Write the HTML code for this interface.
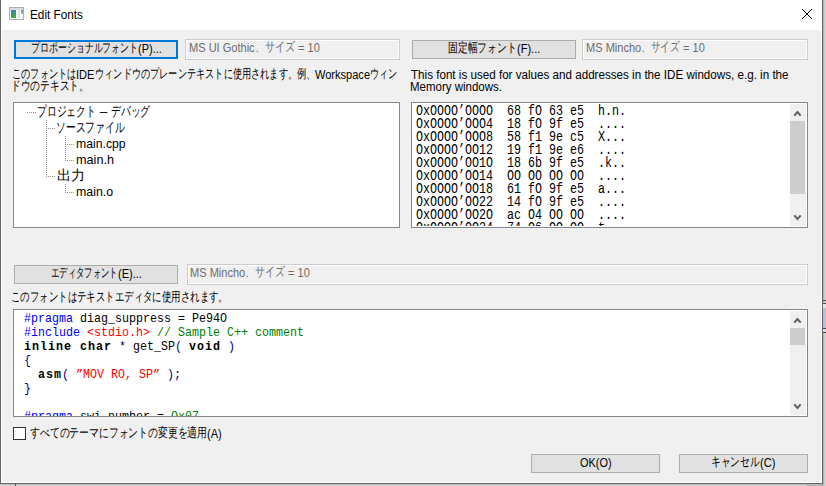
<!DOCTYPE html>
<html lang="ja">
<head>
<meta charset="utf-8">
<title>Edit Fonts</title>
<style>
html,body{margin:0;padding:0;}
body{width:826px;height:486px;overflow:hidden;position:relative;background:#d0d0d0;font-family:"Liberation Sans",sans-serif;color:#000;}
.a{position:absolute;}
.bm{display:inline-block;width:0;height:0;vertical-align:baseline;}.s{position:absolute;white-space:pre;transform-origin:0 0;}.r{display:inline-block;vertical-align:baseline;}.ri{display:inline-block;transform-origin:0 0;white-space:pre;}
.mono{font-family:"Liberation Mono",monospace;white-space:pre;color:#000;}
.pp{color:#0000ff;}
.str{color:#ff0000;}
.cm{color:#008000;}
.op{color:#000080;}
.mono b{letter-spacing:1.115px;}
</style>
</head>
<body>
<div class="a" style="left:0px;top:0px;width:823px;height:484px;background:#666;"></div>
<div class="a" style="left:1px;top:0px;width:821px;height:483px;background:#fff;"></div>
<div class="a" style="left:2px;top:30px;width:819px;height:452px;background:#f0f0f0;"></div>
<div class="a" style="left:823px;top:0px;width:3px;height:486px;background:linear-gradient(to right,#a8a8a8,#d0d0d0 60%,#e0e0e0);"></div>
<div class="a" style="left:0px;top:484px;width:823px;height:2px;background:linear-gradient(to bottom,#b8b8b8,#d8d8d8);"></div>
<div class="a" style="left:15px;top:484px;width:1px;height:2px;background:#555;"></div>
<div class="a" style="left:806px;top:484px;width:17px;height:2px;background:#b4b4b4;"></div>
<div class="a" style="left:823px;top:300px;width:3px;height:1px;background:#555;"></div>
<div class="a" style="left:823px;top:303px;width:3px;height:1px;background:#555;"></div>
<div class="a" style="left:823px;top:304px;width:3px;height:4px;background:#e4e4ec;"></div>
<div class="a" style="left:823px;top:308px;width:3px;height:20px;background:#b4c4d4;"></div>
<div class="a" style="left:823px;top:328px;width:3px;height:1px;background:#444;"></div>
<div class="a" style="left:823px;top:329px;width:3px;height:3px;background:#d8d8e8;"></div>
<div class="a" style="left:823px;top:332px;width:3px;height:1px;background:#444;"></div>
<svg class="a" style="left:9px;top:7px" width="15" height="13" viewBox="0 0 15 13">
<rect x="0.5" y="0.5" width="14" height="12" fill="#fafafa" stroke="#a9adb5"/>
<rect x="1" y="1" width="13" height="2" fill="#d8dbe0"/>
<defs><linearGradient id="g1" x1="0" y1="0" x2="0.4" y2="1"><stop offset="0" stop-color="#4a78bf"/><stop offset="1" stop-color="#3aae48"/></linearGradient>
<linearGradient id="g2" x1="0" y1="0" x2="0" y2="1"><stop offset="0" stop-color="#5a8ad0"/><stop offset="1" stop-color="#8fd080"/></linearGradient></defs>
<rect x="2" y="3" width="5" height="8" fill="url(#g1)"/>
<rect x="9" y="3" width="2" height="8" fill="#e2e2e2"/>
<rect x="12" y="3" width="2" height="4" fill="url(#g2)"/>
</svg>
<div class="s" style="left:30.00px;top:7.0px;font-size:12px;line-height:16px;color:#000;"><span class="bm"></span><span class="r" style="width:53.018px"><span class="ri" style="font-size:12px;transform:scaleX(0.9812);">Edit Fonts</span></span></div>
<svg class="a" style="left:802px;top:9px" width="10" height="10" viewBox="0 0 10 10" fill="#000" shape-rendering="crispEdges"><rect x="0" y="0" width="1" height="1"/><rect x="9" y="0" width="1" height="1"/><rect x="1" y="1" width="1" height="1"/><rect x="8" y="1" width="1" height="1"/><rect x="2" y="2" width="1" height="1"/><rect x="7" y="2" width="1" height="1"/><rect x="3" y="3" width="1" height="1"/><rect x="6" y="3" width="1" height="1"/><rect x="4" y="4" width="1" height="1"/><rect x="5" y="4" width="1" height="1"/><rect x="5" y="5" width="1" height="1"/><rect x="4" y="5" width="1" height="1"/><rect x="6" y="6" width="1" height="1"/><rect x="3" y="6" width="1" height="1"/><rect x="7" y="7" width="1" height="1"/><rect x="2" y="7" width="1" height="1"/><rect x="8" y="8" width="1" height="1"/><rect x="1" y="8" width="1" height="1"/><rect x="9" y="9" width="1" height="1"/><rect x="0" y="9" width="1" height="1"/><rect x="4" y="4" width="2" height="2"/></svg>
<div class="a" style="left:14px;top:40px;width:164px;height:19px;box-sizing:border-box;border:2px solid #0078d7;background:#e1e1e1;"></div>
<div class="s" style="left:31.00px;top:41.0px;font-size:12px;line-height:16px;color:#000;"><span class="bm"></span><span class="r" style="width:107.209px"><span class="ri" style="font-size:13px;transform:scaleX(0.6872);position:relative;top:-1px;">プロポーショナルフォント</span></span><span class="r" style="width:23.920px"><span class="ri" style="font-size:12px;transform:scaleX(0.9200);">(P)...</span></span></div>
<div class="a" style="left:185px;top:39px;width:215px;height:21px;box-sizing:border-box;border:1px solid #cccccc;background:#f0f0f0;box-shadow:inset 0 0 0 1px #ffffff;"></div>
<div class="s" style="left:189.00px;top:40.0px;font-size:12px;line-height:16px;color:#6d6d6d;"><span class="bm"></span><span class="r" style="width:65.651px"><span class="ri" style="font-size:12px;transform:scaleX(0.9200);">MS UI Gothic</span></span><span class="r" style="width:40.300px"><span class="ri" style="font-size:13px;transform:scaleX(0.7750);position:relative;top:-1px;">、サイズ</span></span><span class="r" style="width:24.869px"><span class="ri" style="font-size:12px;transform:scaleX(0.9200);"> = 10</span></span></div>
<div class="a" style="left:412px;top:40px;width:164px;height:19px;box-sizing:border-box;border:1px solid #adadad;background:#e1e1e1;"></div>
<div class="s" style="left:448.00px;top:41.0px;font-size:12px;line-height:16px;color:#000;"><span class="bm"></span><span class="r" style="width:68.756px"><span class="ri" style="font-size:13px;transform:scaleX(0.7556);position:relative;top:-1px;">固定幅フォント</span></span><span class="r" style="width:23.302px"><span class="ri" style="font-size:12px;transform:scaleX(0.9200);">(F)...</span></span></div>
<div class="a" style="left:582px;top:39px;width:226px;height:21px;box-sizing:border-box;border:1px solid #cccccc;background:#f0f0f0;box-shadow:inset 0 0 0 1px #ffffff;"></div>
<div class="s" style="left:586.00px;top:40.0px;font-size:12px;line-height:16px;color:#6d6d6d;"><span class="bm"></span><span class="r" style="width:55.229px"><span class="ri" style="font-size:12px;transform:scaleX(0.9200);">MS Mincho</span></span><span class="r" style="width:38.480px"><span class="ri" style="font-size:13px;transform:scaleX(0.7400);position:relative;top:-1px;">、サイズ</span></span><span class="r" style="width:24.869px"><span class="ri" style="font-size:12px;transform:scaleX(0.9200);"> = 10</span></span></div>
<div class="s" style="left:12.00px;top:67.0px;font-size:12px;line-height:16px;color:#000;"><span class="bm"></span><span class="r" style="width:64.256px"><span class="ri" style="font-size:13px;transform:scaleX(0.7061);position:relative;top:-1px;">このフォントは</span></span><span class="r" style="width:18.414px"><span class="ri" style="font-size:12px;transform:scaleX(0.9200);">IDE</span></span><span class="r" style="width:220.305px"><span class="ri" style="font-size:13px;transform:scaleX(0.7061);position:relative;top:-1px;">ウィンドウのプレーンテキストに使用されます。例、</span></span><span class="r" style="width:55.028px"><span class="ri" style="font-size:12px;transform:scaleX(0.9200);">Workspace</span></span><span class="r" style="width:27.538px"><span class="ri" style="font-size:13px;transform:scaleX(0.7061);position:relative;top:-1px;">ウィン</span></span></div>
<div class="s" style="left:11.00px;top:79.0px;font-size:12px;line-height:16px;color:#000;"><span class="bm"></span><span class="r" style="width:77.964px"><span class="ri" style="font-size:13px;transform:scaleX(0.7497);position:relative;top:-1px;">ドウのテキスト。</span></span></div>
<div class="s" style="left:411.00px;top:67.0px;font-size:12px;line-height:16px;color:#000;"><span class="bm"></span><span class="r" style="width:377.561px"><span class="ri" style="font-size:12px;transform:scaleX(0.9692);">This font is used for values and addresses in the IDE windows, e.g. in the</span></span></div>
<div class="s" style="left:410.00px;top:79.0px;font-size:12px;line-height:16px;color:#000;"><span class="bm"></span><span class="r" style="width:91.916px"><span class="ri" style="font-size:12px;transform:scaleX(0.9571);">Memory windows.</span></span></div>
<div class="a" style="left:13px;top:102px;width:387px;height:126px;box-sizing:border-box;border:1px solid #828790;background:#fff;"></div>
<div class="a" style="left:27px;top:112px;width:1px;height:1px;background:#909090;"></div><div class="a" style="left:29px;top:112px;width:1px;height:1px;background:#909090;"></div><div class="a" style="left:31px;top:112px;width:1px;height:1px;background:#909090;"></div><div class="a" style="left:33px;top:112px;width:1px;height:1px;background:#909090;"></div><div class="a" style="left:35px;top:112px;width:1px;height:1px;background:#909090;"></div>
<div class="a" style="left:46px;top:120px;width:1px;height:1px;background:#909090;"></div><div class="a" style="left:46px;top:122px;width:1px;height:1px;background:#909090;"></div><div class="a" style="left:46px;top:124px;width:1px;height:1px;background:#909090;"></div><div class="a" style="left:46px;top:126px;width:1px;height:1px;background:#909090;"></div><div class="a" style="left:46px;top:128px;width:1px;height:1px;background:#909090;"></div><div class="a" style="left:46px;top:130px;width:1px;height:1px;background:#909090;"></div><div class="a" style="left:46px;top:132px;width:1px;height:1px;background:#909090;"></div><div class="a" style="left:46px;top:134px;width:1px;height:1px;background:#909090;"></div><div class="a" style="left:46px;top:136px;width:1px;height:1px;background:#909090;"></div><div class="a" style="left:46px;top:138px;width:1px;height:1px;background:#909090;"></div><div class="a" style="left:46px;top:140px;width:1px;height:1px;background:#909090;"></div><div class="a" style="left:46px;top:142px;width:1px;height:1px;background:#909090;"></div><div class="a" style="left:46px;top:144px;width:1px;height:1px;background:#909090;"></div><div class="a" style="left:46px;top:146px;width:1px;height:1px;background:#909090;"></div><div class="a" style="left:46px;top:148px;width:1px;height:1px;background:#909090;"></div><div class="a" style="left:46px;top:150px;width:1px;height:1px;background:#909090;"></div><div class="a" style="left:46px;top:152px;width:1px;height:1px;background:#909090;"></div><div class="a" style="left:46px;top:154px;width:1px;height:1px;background:#909090;"></div><div class="a" style="left:46px;top:156px;width:1px;height:1px;background:#909090;"></div><div class="a" style="left:46px;top:158px;width:1px;height:1px;background:#909090;"></div><div class="a" style="left:46px;top:160px;width:1px;height:1px;background:#909090;"></div><div class="a" style="left:46px;top:162px;width:1px;height:1px;background:#909090;"></div><div class="a" style="left:46px;top:164px;width:1px;height:1px;background:#909090;"></div><div class="a" style="left:46px;top:166px;width:1px;height:1px;background:#909090;"></div><div class="a" style="left:46px;top:168px;width:1px;height:1px;background:#909090;"></div><div class="a" style="left:46px;top:170px;width:1px;height:1px;background:#909090;"></div><div class="a" style="left:46px;top:172px;width:1px;height:1px;background:#909090;"></div><div class="a" style="left:46px;top:174px;width:1px;height:1px;background:#909090;"></div><div class="a" style="left:46px;top:176px;width:1px;height:1px;background:#909090;"></div>
<div class="a" style="left:48px;top:128px;width:1px;height:1px;background:#909090;"></div><div class="a" style="left:50px;top:128px;width:1px;height:1px;background:#909090;"></div><div class="a" style="left:52px;top:128px;width:1px;height:1px;background:#909090;"></div><div class="a" style="left:54px;top:128px;width:1px;height:1px;background:#909090;"></div>
<div class="a" style="left:48px;top:176px;width:1px;height:1px;background:#909090;"></div><div class="a" style="left:50px;top:176px;width:1px;height:1px;background:#909090;"></div><div class="a" style="left:52px;top:176px;width:1px;height:1px;background:#909090;"></div><div class="a" style="left:54px;top:176px;width:1px;height:1px;background:#909090;"></div>
<div class="a" style="left:65px;top:136px;width:1px;height:1px;background:#909090;"></div><div class="a" style="left:65px;top:138px;width:1px;height:1px;background:#909090;"></div><div class="a" style="left:65px;top:140px;width:1px;height:1px;background:#909090;"></div><div class="a" style="left:65px;top:142px;width:1px;height:1px;background:#909090;"></div><div class="a" style="left:65px;top:144px;width:1px;height:1px;background:#909090;"></div><div class="a" style="left:65px;top:146px;width:1px;height:1px;background:#909090;"></div><div class="a" style="left:65px;top:148px;width:1px;height:1px;background:#909090;"></div><div class="a" style="left:65px;top:150px;width:1px;height:1px;background:#909090;"></div><div class="a" style="left:65px;top:152px;width:1px;height:1px;background:#909090;"></div><div class="a" style="left:65px;top:154px;width:1px;height:1px;background:#909090;"></div><div class="a" style="left:65px;top:156px;width:1px;height:1px;background:#909090;"></div><div class="a" style="left:65px;top:158px;width:1px;height:1px;background:#909090;"></div><div class="a" style="left:65px;top:160px;width:1px;height:1px;background:#909090;"></div>
<div class="a" style="left:67px;top:144px;width:1px;height:1px;background:#909090;"></div><div class="a" style="left:69px;top:144px;width:1px;height:1px;background:#909090;"></div><div class="a" style="left:71px;top:144px;width:1px;height:1px;background:#909090;"></div><div class="a" style="left:73px;top:144px;width:1px;height:1px;background:#909090;"></div>
<div class="a" style="left:67px;top:160px;width:1px;height:1px;background:#909090;"></div><div class="a" style="left:69px;top:160px;width:1px;height:1px;background:#909090;"></div><div class="a" style="left:71px;top:160px;width:1px;height:1px;background:#909090;"></div><div class="a" style="left:73px;top:160px;width:1px;height:1px;background:#909090;"></div>
<div class="a" style="left:65px;top:184px;width:1px;height:1px;background:#909090;"></div><div class="a" style="left:65px;top:186px;width:1px;height:1px;background:#909090;"></div><div class="a" style="left:65px;top:188px;width:1px;height:1px;background:#909090;"></div><div class="a" style="left:65px;top:190px;width:1px;height:1px;background:#909090;"></div><div class="a" style="left:65px;top:192px;width:1px;height:1px;background:#909090;"></div>
<div class="a" style="left:67px;top:192px;width:1px;height:1px;background:#909090;"></div><div class="a" style="left:69px;top:192px;width:1px;height:1px;background:#909090;"></div><div class="a" style="left:71px;top:192px;width:1px;height:1px;background:#909090;"></div><div class="a" style="left:73px;top:192px;width:1px;height:1px;background:#909090;"></div>
<div class="s" style="left:37.00px;top:103.0px;font-size:13px;line-height:17px;color:#000;"><span class="bm"></span><span class="r" style="width:58.800px"><span class="ri" style="font-size:14px;transform:scaleX(0.7000);">プロジェクト</span></span><span class="r" style="width:15.192px"><span class="ri" style="font-size:13px;transform:scaleX(1.0500);"> – </span></span><span class="r" style="width:39.200px"><span class="ri" style="font-size:14px;transform:scaleX(0.7000);">デバッグ</span></span></div>
<div class="s" style="left:56.00px;top:119.0px;font-size:13px;line-height:17px;color:#000;"><span class="bm"></span><span class="r" style="width:68.600px"><span class="ri" style="font-size:14px;transform:scaleX(0.7000);">ソースファイル</span></span></div>
<div class="s" style="left:76.00px;top:135.0px;font-size:13px;line-height:17px;color:#000;"><span class="bm"></span><span class="r" style="width:49.585px"><span class="ri" style="font-size:13px;transform:scaleX(0.9400);">main.cpp</span></span></div>
<div class="s" style="left:76.00px;top:151.0px;font-size:13px;line-height:17px;color:#000;"><span class="bm"></span><span class="r" style="width:37.967px"><span class="ri" style="font-size:13px;transform:scaleX(0.9727);">main.h</span></span></div>
<div class="s" style="left:57.00px;top:167.0px;font-size:13px;line-height:17px;color:#000;"><span class="bm"></span><span class="r" style="width:28.000px"><span class="ri" style="font-size:14px;transform:scaleX(1.0000);">出力</span></span></div>
<div class="s" style="left:76.00px;top:183.0px;font-size:13px;line-height:17px;color:#000;"><span class="bm"></span><span class="r" style="width:37.080px"><span class="ri" style="font-size:13px;transform:scaleX(0.9500);">main.o</span></span></div>
<div class="a" style="left:411px;top:102px;width:397px;height:126px;box-sizing:border-box;border:1px solid #828790;background:#fff;"></div>
<div class="a" style="left:412px;top:103px;width:394px;height:123px;overflow:hidden;"><div class="mono" style="position:absolute;left:4px;top:2.0px;font-size:14px;letter-spacing:0px;line-height:13px;transform:scaleX(0.8333);transform-origin:0 0;">OxOOOO’OOOO  68 fO 63 e5  h.n.
OxOOOO’OOO4  18 fO 9f e5  ....
OxOOOO’OOO8  58 f1 9e c5  X...
OxOOOO’OO12  19 f1 9e e6  ....
OxOOOO’OO1O  18 6b 9f e5  .k..
OxOOOO’OO14  OO OO OO OO  ....
OxOOOO’OO18  61 fO 9f e5  a...
OxOOOO’OO22  14 fO 9f e5  ....
OxOOOO’OO2O  ac O4 OO OO  ....
OxOOOO’OO24  74 O6 OO OO  t...</div></div>
<div class="a" style="left:790px;top:104px;width:16px;height:122px;background:#f0f0f0;"></div><div class="a" style="left:790px;top:121px;width:15px;height:73px;background:#cdcdcd;"></div><svg class="a" style="left:793px;top:109px" width="9" height="8" viewBox="0 0 9 8"><path d="M1.3 6.6 L4.5 3 L7.7 6.6" stroke="#606060" stroke-width="2" stroke-linejoin="miter" fill="none"/></svg><svg class="a" style="left:793px;top:214px" width="9" height="8" viewBox="0 0 9 8"><path d="M1.3 1.4 L4.5 5 L7.7 1.4" stroke="#606060" stroke-width="2" stroke-linejoin="miter" fill="none"/></svg>
<div class="a" style="left:14px;top:265px;width:164px;height:19px;box-sizing:border-box;border:1px solid #adadad;background:#e1e1e1;"></div>
<div class="s" style="left:51.00px;top:266.0px;font-size:12px;line-height:16px;color:#000;"><span class="bm"></span><span class="r" style="width:66.761px"><span class="ri" style="font-size:13px;transform:scaleX(0.6419);position:relative;top:-1px;">エディタフォント</span></span><span class="r" style="width:23.920px"><span class="ri" style="font-size:12px;transform:scaleX(0.9200);">(E)...</span></span></div>
<div class="a" style="left:187px;top:264px;width:621px;height:21px;box-sizing:border-box;border:1px solid #cccccc;background:#f0f0f0;box-shadow:inset 0 0 0 1px #ffffff;"></div>
<div class="s" style="left:190.00px;top:265.0px;font-size:12px;line-height:16px;color:#6d6d6d;"><span class="bm"></span><span class="r" style="width:55.229px"><span class="ri" style="font-size:12px;transform:scaleX(0.9200);">MS Mincho</span></span><span class="r" style="width:39.520px"><span class="ri" style="font-size:13px;transform:scaleX(0.7600);position:relative;top:-1px;">、サイズ</span></span><span class="r" style="width:24.869px"><span class="ri" style="font-size:12px;transform:scaleX(0.9200);"> = 10</span></span></div>
<div class="s" style="left:11.00px;top:290.0px;font-size:12px;line-height:16px;color:#000;"><span class="bm"></span><span class="r" style="width:216.892px"><span class="ri" style="font-size:13px;transform:scaleX(0.7254);position:relative;top:-1px;">このフォントはテキストエディタに使用されます。</span></span></div>
<div class="a" style="left:13px;top:309px;width:795px;height:108px;box-sizing:border-box;border:1px solid #828790;background:#fff;"></div>
<div class="a" style="left:14px;top:310px;width:792px;height:106px;overflow:hidden;"><div class="mono" style="position:absolute;left:10px;top:2.0px;font-size:13px;letter-spacing:0px;line-height:14px;transform:scaleX(0.8974);transform-origin:0 0;"><span class="pp">#pragma</span> diag_suppress = Pe94O
<span class="pp">#include</span> <span class="str">&lt;stdio.h&gt;</span> <span class="cm">// Sample C++ comment</span>
<b>inline char</b> <span class="op">*</span> get_SP<span class="op">(</span> <b>void</b> <span class="op">)</span>
<span class="op">{</span>
  <b>asm</b><span class="op">(</span> <span class="str">”MOV RO, SP”</span> <span class="op">);</span>
<span class="op">}</span>

<span class="pp">#pragma</span> swi_number = <span class="cm">Ox07</span></div></div>
<div class="a" style="left:790px;top:311px;width:16px;height:104px;background:#f0f0f0;"></div><div class="a" style="left:790px;top:328px;width:15px;height:17px;background:#cdcdcd;"></div><svg class="a" style="left:793px;top:316px" width="9" height="8" viewBox="0 0 9 8"><path d="M1.3 6.6 L4.5 3 L7.7 6.6" stroke="#606060" stroke-width="2" stroke-linejoin="miter" fill="none"/></svg><svg class="a" style="left:793px;top:403px" width="9" height="8" viewBox="0 0 9 8"><path d="M1.3 1.4 L4.5 5 L7.7 1.4" stroke="#606060" stroke-width="2" stroke-linejoin="miter" fill="none"/></svg>
<div class="a" style="left:13px;top:427px;width:13px;height:13px;box-sizing:border-box;border:1px solid #333;background:#fff;"></div>
<div class="s" style="left:30.00px;top:426.0px;font-size:12px;line-height:16px;color:#000;"><span class="bm"></span><span class="r" style="width:177.026px"><span class="ri" style="font-size:13px;transform:scaleX(0.7565);position:relative;top:-1px;">すべてのテーマにフォントの変更を適用</span></span><span class="r" style="width:14.720px"><span class="ri" style="font-size:12px;transform:scaleX(0.9200);">(A)</span></span></div>
<div class="a" style="left:531px;top:454px;width:129px;height:19px;box-sizing:border-box;border:1px solid #adadad;background:#e1e1e1;"></div>
<div class="s" style="left:580.00px;top:455.0px;font-size:12px;line-height:16px;color:#000;"><span class="bm"></span><span class="r" style="width:31.551px"><span class="ri" style="font-size:12px;transform:scaleX(0.9100);">OK(O)</span></span></div>
<div class="a" style="left:679px;top:454px;width:129px;height:19px;box-sizing:border-box;border:1px solid #adadad;background:#e1e1e1;"></div>
<div class="s" style="left:711.00px;top:455.0px;font-size:12px;line-height:16px;color:#000;"><span class="bm"></span><span class="r" style="width:48.579px"><span class="ri" style="font-size:13px;transform:scaleX(0.7474);position:relative;top:-1px;">キャンセル</span></span><span class="r" style="width:15.338px"><span class="ri" style="font-size:12px;transform:scaleX(0.9200);">(C)</span></span></div>
</body>
</html>
